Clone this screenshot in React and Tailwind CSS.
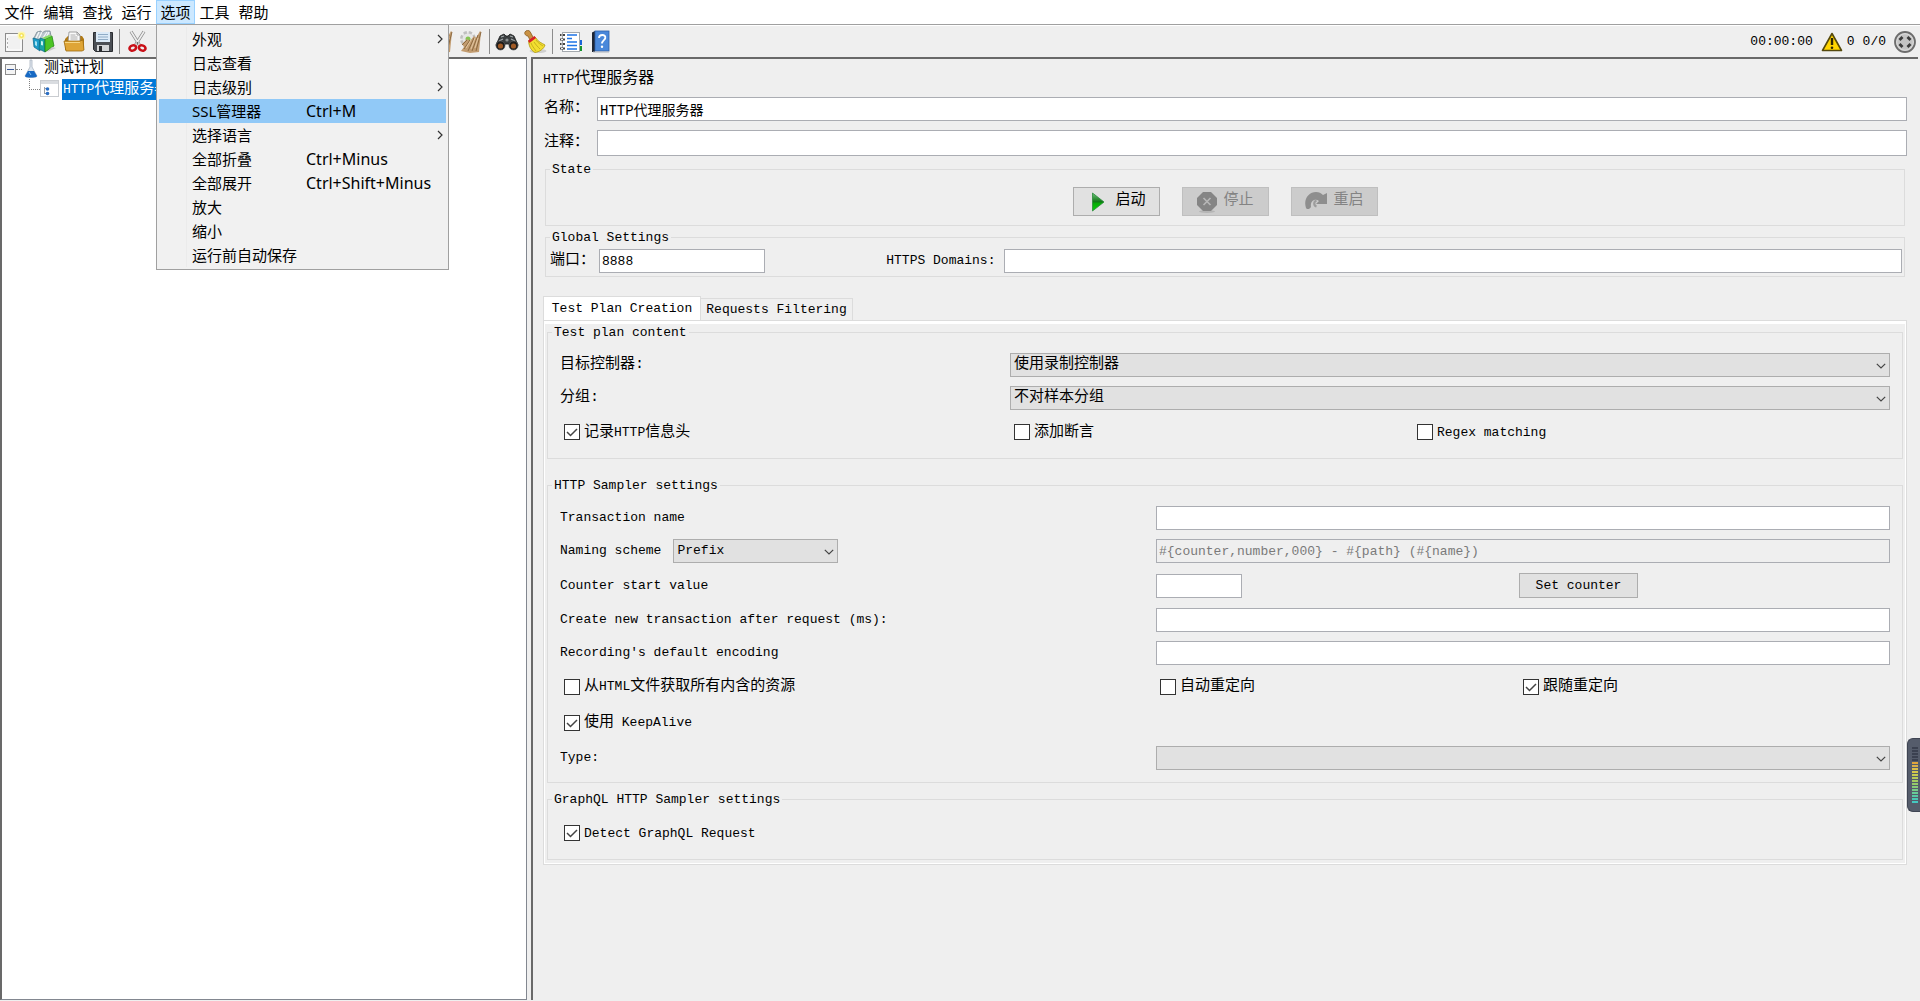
import { useState } from "react";

const SONG = "font-['Liberation_Mono','Noto_Sans_CJK_SC',monospace]";
const YAHEI = "font-['Noto_Sans','Noto_Sans_CJK_SC',sans-serif]";

const MENUS = ["文件", "编辑", "查找", "运行", "选项", "工具", "帮助"];

const OPTIONS_MENU = [
  { label: "外观", sub: true },
  { label: "日志查看" },
  { label: "日志级别", sub: true },
  { label: "SSL管理器", keys: "Ctrl+M" },
  { label: "选择语言", sub: true },
  { label: "全部折叠", keys: "Ctrl+Minus" },
  { label: "全部展开", keys: "Ctrl+Shift+Minus" },
  { label: "放大" },
  { label: "缩小" },
  { label: "运行前自动保存" },
];

// Chinese runs are set at 15px, latin runs at 13px so both keep the SimSun rhythm
function Mixed({ children }) {
  return children.split(/([\u3000-\uffef]+)/).map((part, i) =>
    part ? (
      <span key={i} className={i % 2 ? "text-[15px]" : "text-[13px] whitespace-pre"}>
        {part}
      </span>
    ) : null
  );
}

/* ---------- icons ---------- */

function NewIcon() {
  return (
    <svg width="24" height="24" viewBox="0 0 24 24">
      <rect x="2.5" y="3.5" width="17" height="18" fill="#f1f1f1" stroke="#8c8c8c" />
      <path d="M4 5h14v15H4z" fill="none" stroke="#fff" />
      <path d="M4.500 8v2M4.500 12v2M4.500 16v2" stroke="#b0b0b0" />
      <circle cx="18.500" cy="5.500" r="4" fill="#fdf6b0" />
      <circle cx="18.500" cy="5.500" r="2.500" fill="#f5e45c" />
      <circle cx="18.500" cy="5.500" r="1" fill="#fff" />
    </svg>
  );
}

function TemplatesIcon() {
  return (
    <svg width="24" height="24" viewBox="0 0 24 24">
      <path d="M2 8l3-6 4-1 1 2 3-2h5l1 5-3 6H4z" fill="#b9c5cc" stroke="#74858f" strokeWidth=".8" />
      <path d="M4 8l3-6M7 8l3-6M11 8l4-6M14 8l3-6" stroke="#f4f7f8" strokeWidth="1.300" />
      <path d="M1 8l7 2v11l-6-4z" fill="#1d9dc9" stroke="#0b6688" strokeWidth=".7" />
      <path d="M3 11l2 .7v4.500L3 15z" fill="#a5e2f3" />
      <path d="M8 8l5 1.500V22l-6-3z" fill="#1aa4a4" stroke="#0b6688" strokeWidth=".7" />
      <path d="M9 11l2 .6v4L9 15z" fill="#c8f2ee" />
      <path d="M13 9l7-3 2 10-9 6z" fill="#4cc424" stroke="#1c7d10" strokeWidth=".7" />
      <path d="M13 9l-3-1 7-3 3 1z" fill="#86dc60" />
      <path d="M20 17l4 1-9 4z" fill="#c8c8c8" />
    </svg>
  );
}

function OpenIcon() {
  return (
    <svg width="24" height="24" viewBox="0 0 24 24">
      <path d="M3 20V9l3-3h14l2 3v11z" fill="#b27a14" />
      <path d="M6 12l1-10h8l3 3v7z" fill="#fafafa" stroke="#8e8e8e" strokeWidth=".8" />
      <path d="M15 2v3h3" fill="none" stroke="#8e8e8e" strokeWidth=".8" />
      <path d="M8.500 5h5M8.500 7h7M8.500 9h7" stroke="#9a9a9a" strokeWidth=".8" />
      <path d="M2 11h16l3-1 1 10-2 1H4z" fill="#dfa536" stroke="#a06d10" strokeWidth=".8" />
      <path d="M3 12.500h15" stroke="#f6d684" />
    </svg>
  );
}

function SaveIcon() {
  return (
    <svg width="24" height="24" viewBox="0 0 24 24">
      <path d="M2.500 2.500h19v19h-17l-2-2z" fill="#4b4f55" stroke="#2b2d31" />
      <rect x="5" y="2" width="14" height="10" fill="#dcebf8" />
      <path d="M7 4.500h10M7 7h10M7 9.500h10" stroke="#90acc6" />
      <rect x="6" y="15" width="12" height="6" fill="#d4d6d8" />
      <rect x="8" y="16" width="3" height="5" fill="#2b2d31" />
    </svg>
  );
}

function CutIcon() {
  return (
    <svg width="24" height="24" viewBox="0 0 24 24" fill="none">
      <path d="M5 1.500l8.500 13.500M18 1.500L9.500 15" stroke="#8a8a8a" strokeWidth="3.200" />
      <path d="M5 1.500l8.500 13.500M18 1.500L9.500 15" stroke="#efefef" strokeWidth="1.600" />
      <ellipse cx="6.800" cy="18" rx="3.400" ry="2.500" transform="rotate(-20 6.800 18)" stroke="#c91018" strokeWidth="2.600" />
      <ellipse cx="16.200" cy="18" rx="3.400" ry="2.500" transform="rotate(20 16.200 18)" stroke="#c91018" strokeWidth="2.600" />
      <circle cx="11.500" cy="13" r="1" fill="#666" />
    </svg>
  );
}

function PageIcon() {
  return (
    <svg width="24" height="24" viewBox="0 0 24 24">
      <rect x="2.500" y="2.500" width="15" height="18" fill="#e8e8e8" stroke="#bdbdbd" />
      <rect x="6.500" y="5.500" width="14" height="16" fill="#f7f7f7" stroke="#9b9b9b" />
    </svg>
  );
}

function PlayIcon() {
  return (
    <svg width="24" height="24" viewBox="0 0 24 24">
      <defs>
        <linearGradient id="play" x1="0" y1="0" x2="0" y2="1">
          <stop offset="0" stopColor="#6cc47a" />
          <stop offset=".5" stopColor="#0f7414" />
          <stop offset=".55" stopColor="#06a806" />
          <stop offset="1" stopColor="#0ad00a" />
        </linearGradient>
      </defs>
      <path d="M6.500 3v18L18 12z" fill="url(#play)" stroke="#2a8a3a" strokeWidth=".8" />
    </svg>
  );
}

function ClearIcon() {
  return (
    <svg width="24" height="24" viewBox="0 0 24 24">
      <circle cx="9" cy="9" r="6.500" fill="#e2e2e2" stroke="#c0c0c0" strokeWidth="3" strokeDasharray="3.200 1.900" />
      <circle cx="9" cy="9" r="5.500" fill="#e6e6e6" />
      <circle cx="9" cy="9" r="2.500" fill="#86c452" />
      <path d="M3 14l5-5 3 2 4-5 2 2 4-7 1 1-2 20-9 1-9-2 3-4z" fill="#c29c70" />
      <path d="M5 19l6-9M9 21l6-13M13 21l6-16M17 21l5-19M3 15l5-5" stroke="#86633a" strokeWidth=".9" />
      <path d="M7 18l5-8M12 19l4-11M16 18l3-10" stroke="#e6cba6" strokeWidth=".9" />
    </svg>
  );
}

function BinocularsIcon() {
  return (
    <svg width="24" height="24" viewBox="0 0 24 24">
      <path d="M5 6l4-2 2 2h2l2-2 4 2 4 9-2 4h-5l-2-5h-4l-2 5H3l-2-4z" fill="#3a3e40" stroke="#1b1c1d" strokeWidth=".8" />
      <path d="M6 7l3-1M15 6l3 1M4 11l4-2M16 9l4 2" stroke="#a4aaac" strokeWidth="1.200" />
      <circle cx="5.500" cy="15.500" r="4.500" fill="#1d1d1d" stroke="#5b5f61" strokeWidth=".7" />
      <circle cx="18.500" cy="15.500" r="4.500" fill="#1d1d1d" stroke="#5b5f61" strokeWidth=".7" />
      <circle cx="5.500" cy="16" r="2.600" fill="#a05a26" />
      <circle cx="18.500" cy="16" r="2.600" fill="#a05a26" />
      <circle cx="12" cy="10" r="1.600" fill="#8b9193" />
    </svg>
  );
}

function BroomIcon() {
  return (
    <svg width="24" height="24" viewBox="0 0 24 24">
      <ellipse cx="15" cy="21" rx="8.500" ry="2" fill="#cfcfcf" />
      <path d="M2 2c1-2 4-2 5-.5L10.500 8 7 10 5 6C3 6 1 4 2 2z" fill="#c99245" stroke="#8a5c1e" strokeWidth=".8" />
      <path d="M5.500 11l6-4 1.500 1c2 4 6 5 9 7-1 4-6 7-10 7.500C7 20 6 15 5.500 11z" fill="#f2de30" stroke="#ae9710" strokeWidth=".8" />
      <path d="M8 13c1 3 3 5 5 8M11 12c2 3 4 5 6 7M13 10c2 3 4 4 7 6" stroke="#bba51a" fill="none" strokeWidth=".8" />
      <path d="M5 10.500L11.500 6l1.500 2-6.500 5z" fill="#d8202a" />
    </svg>
  );
}

function ListIcon() {
  return (
    <svg width="24" height="24" viewBox="0 0 24 24">
      <path d="M20 10h3v5h-3z" fill="#1a64d8" />
      <path d="M20 16h3v5h-3z" fill="#16932c" />
      <rect x="3.500" y="2.500" width="17" height="19" fill="#fff" stroke="#a3a8ad" />
      <path d="M8 5h10M8 12h10M8 19h10" stroke="#1f74e6" strokeWidth="1.400" />
      <path d="M8 8.500h5M8 15.500h10" stroke="#1f74e6" strokeWidth="1.400" />
      <path d="M1 5h5M1 9.500h5M1 14h5M1 18.500h5" stroke="#444" strokeWidth="2.200" />
      <path d="M2 5h2M2 9.500h2M2 14h2M2 18.500h2" stroke="#f2f2f2" strokeWidth="1" />
    </svg>
  );
}

function HelpIcon() {
  return (
    <svg width="24" height="24" viewBox="0 0 24 24">
      <path d="M3 2.500L6 1v21H3z" fill="#1f2634" />
      <rect x="6" y="1" width="14" height="20" fill="#4a88da" stroke="#2e62ab" strokeWidth=".8" />
      <path d="M4 22h16" stroke="#aeb3bc" />
      <path d="M10 8c0-4 7-4 6.300 0-.3 2-3.300 2.500-3.300 5.500" fill="none" stroke="#fff" strokeWidth="1.800" />
      <circle cx="13" cy="16.800" r="1.200" fill="#fff" />
    </svg>
  );
}

function WarningIcon() {
  return (
    <svg width="22" height="20" viewBox="0 0 22 20">
      <path d="M11 1.500L20.500 18.500H1.500z" fill="#ffd500" stroke="#55490c" strokeWidth="1.600" strokeLinejoin="round" />
      <path d="M11 6v7" stroke="#2d2604" strokeWidth="2.400" />
      <circle cx="11" cy="15.700" r="1.300" fill="#2d2604" />
    </svg>
  );
}

function RemoteIcon() {
  return (
    <svg width="22" height="22" viewBox="0 0 22 22">
      <circle cx="11" cy="11" r="10" fill="#c4c4c4" stroke="#6d6d6d" strokeWidth="1.800" />
      <circle cx="11" cy="11" r="8.300" fill="none" stroke="#dedede" />
      <path d="M5.500 9L8.500 6M13.500 6l3 3M16.500 13l-3 3M8.500 16l-3-3" stroke="#3c3c3c" strokeWidth="2.800" />
    </svg>
  );
}

function StopIcon() {
  return (
    <svg width="22" height="22" viewBox="0 0 22 22">
      <ellipse cx="11" cy="20.500" rx="8" ry="1.500" fill="#b5b5b5" />
      <path d="M7 1h8l6 6v7l-6 6H7l-6-6V7z" fill="#858585" />
      <path d="M7.500 7l7 7M14.500 7l-7 7" stroke="#b8b8b8" strokeWidth="1.600" />
    </svg>
  );
}

function RestartIcon() {
  return (
    <svg width="24" height="22" viewBox="0 0 24 22">
      <path d="M2 17C-1 8 5 1 12 1c3 0 5 1 7 3l4-2v11H12l3-3c-4-3-9 0-8 6-1 2-4 3-5 1z" fill="#8e8e8e" />
      <path d="M12.500 15.500c-3-1-3-5 0-6" fill="none" stroke="#9c9c9c" strokeWidth="2.200" />
    </svg>
  );
}

function FlaskIcon() {
  return (
    <svg width="14" height="20" viewBox="0 0 14 20">
      <path d="M6 1h2v7l5 9c0 2-12 2-12 0l5-9z" fill="#dfe6ee" stroke="#aab4c0" strokeWidth=".8" />
      <path d="M4 12h6l3 5c0 2-12 2-12 0z" fill="#1769c4" />
      <path d="M5 13l2 3" stroke="#7fc0f5" />
    </svg>
  );
}

function ProxyIcon() {
  return (
    <svg width="20" height="18" viewBox="0 0 20 18">
      <rect x=".5" y=".5" width="18" height="16" fill="#fff" stroke="#c9ccd0" />
      <path d="M1 2.500h17" stroke="#d9dce0" strokeWidth="3" />
      <path d="M4.500 7v7M4.500 8.500h3M4.500 13.500h3" stroke="#9aa0a8" />
      <circle cx="7.500" cy="9" r="1.800" fill="#2c6fc4" />
      <circle cx="7.500" cy="13.500" r="1.800" fill="#2c6fc4" />
    </svg>
  );
}

function Chevron({ className }) {
  return (
    <svg width="10" height="6" viewBox="0 0 10 6" className={className}>
      <path d="M.8.8L5 5 9.200.8" fill="none" stroke="#444" strokeWidth="1.200" />
    </svg>
  );
}

/* ---------- controls ---------- */

function TextField({ className = "", ...rest }) {
  return (
    <input
      type="text"
      className={`h-6 min-w-0 border border-[#abadb3] bg-white px-0.5 text-[13px] outline-none disabled:bg-[#efefef] disabled:text-[#7a7a7a] ${className}`}
      {...rest}
    />
  );
}

function Select({ id, options, className = "", size = "text-[15px]" }) {
  return (
    <div className={`relative ${className}`}>
      <select
        id={id}
        className={`block h-6 w-full appearance-none border border-[#adadad] bg-[#e1e1e1] px-[3px] outline-none ${size}`}
      >
        {options.map((o) => (
          <option key={o}>{o}</option>
        ))}
      </select>
      <Chevron className="pointer-events-none absolute right-1 top-[10px]" />
    </div>
  );
}

function Check({ label, defaultChecked = false }) {
  const [on, setOn] = useState(defaultChecked);
  return (
    <label className="flex h-6 items-center gap-1 pl-1">
      <span className="relative size-4 shrink-0">
        <input
          type="checkbox"
          checked={on}
          onChange={(e) => setOn(e.target.checked)}
          className="block size-4 appearance-none border border-[#333] bg-white"
        />
        {on && (
          <svg width="16" height="16" viewBox="0 0 16 16" className="pointer-events-none absolute inset-0">
            <path d="M3 8l3.500 3.500L13 5" fill="none" stroke="#444" strokeWidth="1.500" />
          </svg>
        )}
      </span>
      <span className="whitespace-nowrap">
        <Mixed>{label}</Mixed>
      </span>
    </label>
  );
}

function Group({ title, className = "", children }) {
  return (
    <fieldset className={`min-w-0 border border-[#dcdcdc] ${className}`}>
      <legend className="ml-1 px-0.5 text-[13px] leading-[17px]">{title}</legend>
      {children}
    </fieldset>
  );
}

function ToolButton({ title, children, className = "w-[30px]" }) {
  return (
    <button type="button" title={title} className={`flex h-[30px] shrink-0 items-center justify-center ${className}`}>
      {children}
    </button>
  );
}

function Divider() {
  return <span className="mx-[3px] h-[25px] w-px shrink-0 bg-[#8c8c8c]" />;
}

/* ---------- page parts ---------- */

function MenuBar() {
  return (
    <nav className={`flex h-[25px] border-b border-[#a0a0a0] bg-white text-[15px] leading-5 ${YAHEI}`}>
      {MENUS.map((m) =>
        m === "选项" ? (
          <div key={m} className="relative">
            <button type="button" className="h-6 w-[39px] border border-[#99d1ff] bg-[#cce8ff]">
              {m}
            </button>
            <OptionsMenu />
          </div>
        ) : (
          <button key={m} type="button" className="h-6 w-[39px]">
            {m}
          </button>
        )
      )}
    </nav>
  );
}

function OptionsMenu() {
  return (
    <ul className="absolute left-0 top-6 z-20 w-[293px] border border-[#a0a0a0] bg-[#f1f1f1] p-0.5">
      {OPTIONS_MENU.map((item) => (
        <li key={item.label}>
          <button
            type="button"
            className={`flex h-6 w-full items-center pr-[3px] text-left ${
              item.keys === "Ctrl+M" ? "bg-[#91c9f7]" : ""
            }`}
          >
            <span className={`h-6 w-7 ${item.keys === "Ctrl+M" ? "" : "border-r border-[#ebebeb]"}`} />
            <span className="w-[119px] pl-[5px]">{item.label}</span>
            <span className="flex-1 whitespace-nowrap text-base leading-5">{item.keys}</span>
            {item.sub && (
              <svg width="6" height="10" viewBox="0 0 6 10">
                <path d="M1 1l4 4-4 4" fill="none" stroke="#333" strokeWidth="1.200" />
              </svg>
            )}
          </button>
        </li>
      ))}
    </ul>
  );
}

function ToolBar() {
  return (
    <header className="flex h-8 shrink-0 items-center border-t border-white pl-px pr-1">
      <ToolButton title="新建" className="w-7"><NewIcon /></ToolButton>
      <ToolButton title="模板"><TemplatesIcon /></ToolButton>
      <ToolButton title="打开"><OpenIcon /></ToolButton>
      <ToolButton title="保存" className="w-[27px]"><SaveIcon /></ToolButton>
      <Divider />
      <ToolButton title="剪切"><CutIcon /></ToolButton>
      <ToolButton title="复制"><PageIcon /></ToolButton>
      <ToolButton title="粘贴"><PageIcon /></ToolButton>
      <Divider />
      <ToolButton title="展开"><PageIcon /></ToolButton>
      <ToolButton title="折叠"><PageIcon /></ToolButton>
      <ToolButton title="切换"><PageIcon /></ToolButton>
      <Divider />
      <ToolButton title="启动" className="w-7"><PlayIcon /></ToolButton>
      <ToolButton title="无停顿启动" className="w-7"><PlayIcon /></ToolButton>
      <ToolButton title="停止" className="w-6"><StopIcon /></ToolButton>
      <ToolButton title="关闭" className="w-6"><StopIcon /></ToolButton>
      <Divider />
      <ToolButton title="清除" className="w-7"><ClearIcon /></ToolButton>
      <ToolButton title="清除全部"><ClearIcon /></ToolButton>
      <Divider />
      <ToolButton title="查找" className="w-7"><BinocularsIcon /></ToolButton>
      <ToolButton title="重置搜索" className="w-7"><BroomIcon /></ToolButton>
      <Divider />
      <ToolButton title="函数助手"><ListIcon /></ToolButton>
      <ToolButton title="帮助"><HelpIcon /></ToolButton>

      <div className="ml-auto flex items-center text-[13px]">
        <span>00:00:00</span>
        <button type="button" title="日志" className="ml-2 flex items-center gap-1">
          <WarningIcon />
          <span>0</span>
        </button>
        <span className="mx-2">0/0</span>
        <RemoteIcon />
      </div>
    </header>
  );
}

function TestTree() {
  return (
    <aside className="w-[527px] shrink-0 border border-l-2 border-t-2 border-[#828790] border-l-[#696969] border-t-[#696969] bg-white">
      <ul>
        <li>
          <div className="flex h-5 items-center pl-[3px]">
            <button
              type="button"
              aria-label="折叠测试计划"
              className="flex size-[11px] items-center justify-center border border-[#8c8c8c] bg-[#f4f4f4]"
            >
              <span className="h-px w-[7px] bg-[#3a5a9a]" />
            </button>
            <span className="mr-0.5 w-[6px] border-t border-dotted border-[#808080]" />
            <FlaskIcon />
            <span className="ml-[6px] text-[15px]">测试计划</span>
          </div>
          <ul>
            <li className="flex h-5 items-center pl-[27px]">
              <span className="h-[11px] w-[11px] self-start border-b border-l border-dotted border-[#808080]" />
              <ProxyIcon />
              <span className="ml-[2px] whitespace-nowrap bg-[#0078d7] px-px leading-5 text-white">
                <Mixed>HTTP代理服务器</Mixed>
              </span>
            </li>
          </ul>
        </li>
      </ul>
    </aside>
  );
}

function StateButton({ icon, children, disabled }) {
  return (
    <button
      type="button"
      disabled={disabled}
      className="flex h-[29px] w-[87px] items-center justify-center gap-[5px] border border-[#adadad] bg-[#e1e1e1] text-[15px] disabled:border-[#bfbfbf] disabled:bg-[#cccccc] disabled:text-[#838383]"
    >
      {icon}
      {children}
    </button>
  );
}

function ContentGroup() {
  return (
    <Group title="Test plan content" className="h-[135px]">
      <div className="px-3 pt-3">
        <div className="grid grid-cols-[450fr_880fr] items-center gap-y-[9px]">
          <label htmlFor="target" className="text-[15px]">目标控制器:</label>
          <Select id="target" options={["使用录制控制器"]} />
          <label htmlFor="grouping" className="text-[15px]">分组:</label>
          <Select id="grouping" options={["不对样本分组"]} />
        </div>
        <div className="mt-[10px] grid grid-cols-[450fr_403fr_477fr]">
          <Check label="记录HTTP信息头" defaultChecked />
          <Check label="添加断言" />
          <Check label="Regex matching" />
        </div>
      </div>
    </Group>
  );
}

function SamplerGroup() {
  return (
    <Group title="HTTP Sampler settings" className="mt-[18px] h-[306px]">
      <div className="px-3 pt-3 text-[13px]">
        <div className="grid grid-cols-[596fr_734fr] items-center gap-y-[9px]">
          <label htmlFor="txName">Transaction name</label>
          <TextField id="txName" />
          <div className="flex items-center gap-3">
            <label htmlFor="scheme">Naming scheme</label>
            <Select id="scheme" options={["Prefix"]} className="w-[165px]" size="text-[13px]" />
          </div>
          <TextField aria-label="Naming format" disabled defaultValue="#{counter,number,000} - #{path} (#{name})" />
        </div>
        <div className="mt-[10px] grid grid-cols-[596fr_363fr_371fr] items-center">
          <label htmlFor="counter">Counter start value</label>
          <TextField id="counter" className="w-[86px]" />
          <button type="button" className="h-[25px] w-[119px] border border-[#adadad] bg-[#e1e1e1]">
            Set counter
          </button>
        </div>
        <div className="mt-[10px] grid grid-cols-[596fr_734fr] items-center gap-y-[9px]">
          <label htmlFor="after">Create new transaction after request (ms):</label>
          <TextField id="after" />
          <label htmlFor="encoding">Recording's default encoding</label>
          <TextField id="encoding" />
        </div>
        <div className="mt-[10px] grid grid-cols-[596fr_363fr_371fr]">
          <Check label="从HTML文件获取所有内含的资源" />
          <Check label="自动重定向" />
          <Check label="跟随重定向" defaultChecked />
        </div>
        <div className="mt-3">
          <Check label="使用 KeepAlive" defaultChecked />
        </div>
        <div className="mt-[11px] grid grid-cols-[596fr_734fr] items-center">
          <label htmlFor="type">Type:</label>
          <Select id="type" options={[""]} />
        </div>
      </div>
    </Group>
  );
}

function ProxyPanel() {
  const [tab, setTab] = useState("creation");

  return (
    <main className="mr-0.5 min-w-0 flex-1 border-l-2 border-t-2 border-[#696969] pl-[10px] pr-[11px]">
      <h1 className="mt-2 h-6 text-base leading-6">
        <span className="text-[13px]">HTTP</span>代理服务器
      </h1>

      <div className="mt-[6px] flex items-center">
        <label htmlFor="name" className="w-[54px] pl-px text-[15px]">名称：</label>
        <input
          id="name"
          type="text"
          defaultValue="HTTP代理服务器"
          className="h-6 min-w-0 flex-1 border border-[#abadb3] bg-white px-0.5 text-[14px] outline-none"
        />
      </div>
      <div className="mt-[9px] flex items-center">
        <label htmlFor="comment" className="w-[54px] pl-px text-[15px]">注释：</label>
        <input
          id="comment"
          type="text"
          className="h-[26px] min-w-0 flex-1 border border-[#abadb3] bg-white px-0.5 text-[14px] outline-none"
        />
      </div>

      <Group title="State" className="mx-0.5 mt-[5px] h-[65px]">
        <div className="flex justify-center gap-[22px] pt-[9px]">
          <StateButton icon={<PlayIcon />}>启动</StateButton>
          <StateButton icon={<StopIcon />} disabled>停止</StateButton>
          <StateButton icon={<RestartIcon />} disabled>重启</StateButton>
        </div>
      </Group>

      <Group title="Global Settings" className="mx-0.5 mt-[3px] h-12">
        <div className="grid grid-cols-[336fr_1015fr] items-center pl-1 pr-0.5 pt-[3px]">
          <div className="flex items-center">
            <label htmlFor="port" className="w-[49px] text-[15px]">端口：</label>
            <TextField id="port" defaultValue="8888" className="w-[166px]" />
          </div>
          <div className="flex items-center gap-[9px]">
            <label htmlFor="domains" className="text-[13px]">HTTPS Domains:</label>
            <TextField id="domains" className="flex-1" />
          </div>
        </div>
      </Group>

      <div className="mt-[19px] flex items-end">
        <button
          type="button"
          onClick={() => setTab("creation")}
          className="h-6 w-[158px] border border-b-0 border-[#dcdcdc] bg-white text-[13px] whitespace-nowrap"
        >
          Test Plan Creation
        </button>
        <button
          type="button"
          onClick={() => setTab("filtering")}
          className="h-[22px] w-[152px] border border-b-0 border-l-0 border-[#dcdcdc] bg-[#efefef] text-[13px] whitespace-nowrap"
        >
          Requests Filtering
        </button>
      </div>
      <div className="border border-[#dcdcdc] bg-white px-px pb-px pt-[3px]">
        <div className="min-h-[539px] bg-[#efefef] px-0.5 pb-[3px]">
          {tab === "creation" && (
            <>
              <ContentGroup />
              <SamplerGroup />
              <Group title="GraphQL HTTP Sampler settings" className="mt-2 h-[69px]">
                <div className="px-3 pt-[13px]">
                  <Check label="Detect GraphQL Request" defaultChecked />
                </div>
              </Group>
            </>
          )}
        </div>
      </div>
    </main>
  );
}

// floating level meter docked to the right edge of the screen
function LevelMeter() {
  const colors = [
    "#3b4150", "#3b4150", "#3b4150", "#3b4150", "#3b4150",
    "#e0a53c", "#d9b04a", "#dcc04a", "#d6c84a", "#c8cc50", "#b8cc58", "#a4cc60",
    "#94cc6a", "#88cc78", "#78cc88", "#68cc98", "#58c8a4", "#4cc8b4", "#44c8c0",
  ];
  return (
    <div className="absolute right-0 top-[738px] z-10 flex h-[74px] w-[13px] flex-col gap-px rounded-l-md border border-r-0 border-[#3f4553] bg-[#555c6b] pl-[4px] pt-2">
      {colors.map((c, i) => (
        <span key={i} className="h-[2px] w-[6px]" style={{ background: c }} />
      ))}
    </div>
  );
}

export default function App() {
  return (
    <div className={`relative flex min-h-screen flex-col overflow-hidden bg-[#efefef] text-black ${SONG}`}>
      <MenuBar />
      <ToolBar />
      <div className="mb-px flex flex-1 gap-1">
        <TestTree />
        <ProxyPanel />
      </div>
      <LevelMeter />
    </div>
  );
}
